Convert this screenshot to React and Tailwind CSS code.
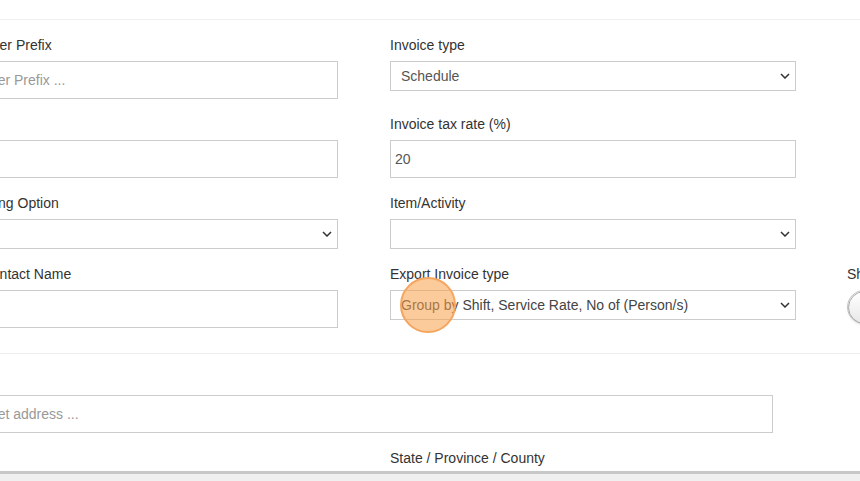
import React from 'react'

const Chevron = () => (
  <svg width="10" height="6" viewBox="0 0 10 6" className="absolute right-[5px] top-1/2 -translate-y-1/2">
    <polyline points="1,1 5,5 9,1" fill="none" stroke="#333" strokeWidth="1.5" />
  </svg>
)

function Field({ label, children, className = '' }) {
  return (
    <div className={className}>
      <label className="block leading-5 mb-[6px] text-[#333] whitespace-nowrap">{label}</label>
      {children}
    </div>
  )
}

function TextInput({ placeholder, value, pad = 'pl-1' }) {
  return (
    <input
      readOnly
      defaultValue={value}
      placeholder={placeholder}
      className={`block w-full h-[38px] border border-[#ccc] bg-white ${pad} text-[#555] placeholder:text-[#999] outline-none`}
    />
  )
}

function Select({ value, tone = 'text-[#555]' }) {
  return (
    <div className="relative h-[30px] border border-[#ccc] bg-white">
      <div className={`h-full flex items-center pl-[10px] ${tone} whitespace-nowrap`}>{value}</div>
      <Chevron />
    </div>
  )
}

export default function App() {
  return (
    <div
      className="w-[860px] h-[481px] overflow-hidden bg-white flex flex-col relative text-[14px]"
      style={{ fontFamily: '"Liberation Sans", Arial, sans-serif' }}
    >
      <div className="h-[471px] overflow-hidden shrink-0">
        <div className="h-[20px] border-b border-[#eee]" />

        <div className="pt-[15px] pb-[10px] ml-[-72px]">
          <div className="flex items-start mb-[15px]">
            <Field label="Invoice Order Prefix" className="w-[410px] mr-[52px] shrink-0">
              <TextInput placeholder="Enter Order Prefix ..." pad="pl-[8px]" />
            </Field>
            <Field label="Invoice type" className="w-[406px] shrink-0">
              <Select value="Schedule" />
            </Field>
          </div>

          <div className="flex items-start mb-[15px]">
            <Field label="Currency" className="w-[410px] mr-[52px] shrink-0">
              <TextInput />
            </Field>
            <Field label="Invoice tax rate (%)" className="w-[406px] shrink-0">
              <TextInput value="20" />
            </Field>
          </div>

          <div className="flex items-start mb-[15px]">
            <Field label="Invoice Billing Option" className="w-[410px] mr-[52px] shrink-0">
              <Select value="" />
            </Field>
            <Field label="Item/Activity" className="w-[406px] shrink-0">
              <Select value="" />
            </Field>
          </div>

          <div className="flex items-start mb-[15px]">
            <Field label="Finance Contact Name" className="w-[410px] mr-[52px] shrink-0">
              <TextInput />
            </Field>
            <Field label="Export Invoice type" className="w-[406px] mr-[51px] shrink-0">
              <Select value="Group by Shift, Service Rate, No of (Person/s)" tone="text-[#444]" />
            </Field>
            <Field label="Show on invoice" className="w-[200px] shrink-0">
              <div className="w-[70px] h-[34px] rounded-full border border-[#ccc] bg-[#f5f5f5] flex items-center">
                <div className="w-[33px] h-[33px] rounded-full border border-[#aaa] bg-gradient-to-b from-white to-[#e8e8e8] shadow-sm" />
              </div>
            </Field>
          </div>
        </div>

        <div className="border-t border-[#eee]" />

        <div className="pt-[15px] ml-[-72px]">
          <Field label="Address" className="w-[845px] mb-[15px]">
            <TextInput placeholder="Enter street address ..." pad="pl-[8px]" />
          </Field>
          <div className="flex items-start">
            <Field label="City" className="w-[410px] mr-[52px] shrink-0">
              <TextInput />
            </Field>
            <Field label="State / Province / County" className="w-[406px] shrink-0">
              <TextInput />
            </Field>
          </div>
        </div>
      </div>

      <div className="flex-1 border-t-[3px] border-[#c8c8c8] bg-[#f0f0f0]" />

      {/* click marker */}
      <div className="absolute left-[400px] top-[277px] w-[56px] h-[56px] rounded-full bg-[#f7a04a]/55 border-2 border-[#f5a55e]" />
    </div>
  )
}
